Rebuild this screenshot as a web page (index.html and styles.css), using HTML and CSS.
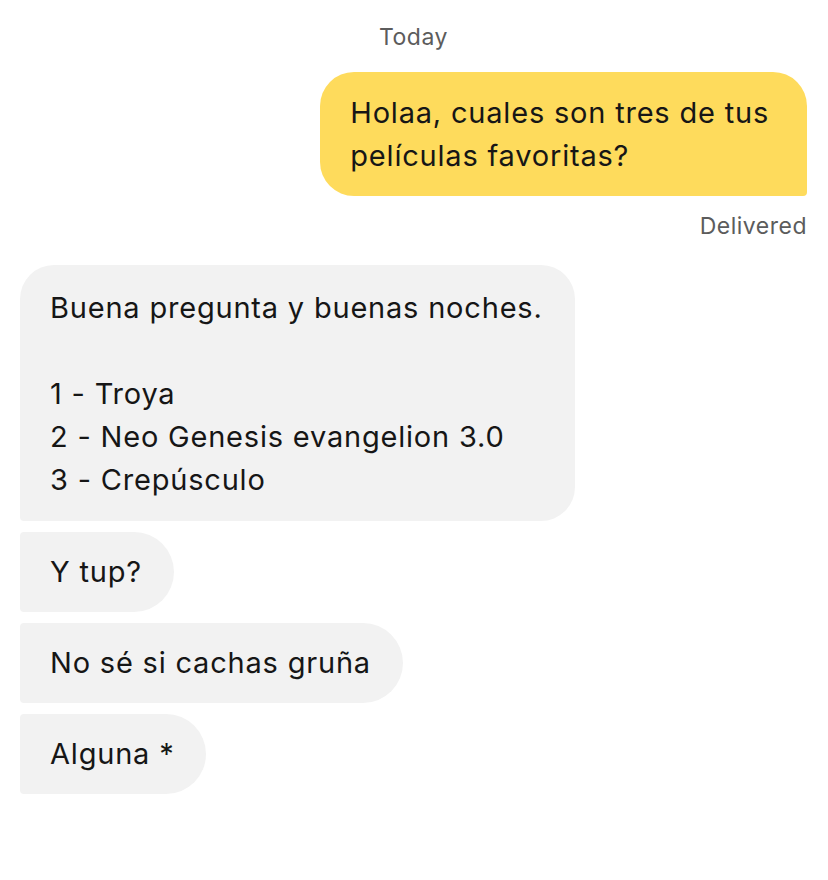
FILE: index.html
```html
<!DOCTYPE html>
<html>
	<head lang="es">
		<meta charset="UTF-8">
		<title>Chat</title>
		<link rel="stylesheet" href="styles.css">
	</head>
	<body>
		<div class="chat">
			<div class="day">Today</div>

			<div class="row out">
				<div class="bubble yellow">Holaa, cuales son tres de tus<br>películas favoritas?</div>
			</div>
			<div class="status">Delivered</div>

			<div class="row in">
				<div class="bubble grey first">Buena pregunta y buenas noches.<br><br>1 - Troya<br>2 - Neo Genesis evangelion 3.0<br>3 - Crepúsculo</div>
			</div>
			<div class="row in">
				<div class="bubble grey">Y tup?</div>
			</div>
			<div class="row in">
				<div class="bubble grey">No sé si cachas gruña</div>
			</div>
			<div class="row in">
				<div class="bubble grey">Alguna *</div>
			</div>
		</div>
	</body>
</html>
```

FILE: styles.css
```css
* {
	margin: 0;
	padding: 0;
	box-sizing: border-box;
}

body {
	background: #fff;
	font-family: Inter, "Open Sans", sans-serif;
	color: #161616;
	width: 828px;
	height: 880px;
}

.chat {
	display: flex;
	flex-direction: column;
	padding: 22px 21px 0 20px;
}

.day {
	text-align: center;
	font-size: 23px;
	letter-spacing: 0.5px;
	line-height: 30px;
	color: #5c5c5c;
	margin-bottom: 20px;
}

.row {
	display: flex;
}

.out {
	justify-content: flex-end;
}

.in {
	justify-content: flex-start;
	margin-bottom: 11px;
}

.bubble {
	font-size: 29px;
	letter-spacing: 0.8px;
	line-height: 43px;
	padding: 19px 30px;
}

.yellow {
	background: #fedb5c;
	border-radius: 34px 34px 4px 34px;
	padding: 19px 38px 19px 30px;
}

.status {
	text-align: right;
	font-size: 23px;
	letter-spacing: 0.5px;
	line-height: 30px;
	color: #5c5c5c;
	margin: 15px 0 24px;
}

.grey {
	background: #f2f2f2;
	border-radius: 4px 40px 40px 4px;
	padding: 18px 32px 19px 30px;
}

.grey.first {
	border-radius: 34px 34px 34px 4px;
	padding: 21px 32px 20px 30px;
}
```
